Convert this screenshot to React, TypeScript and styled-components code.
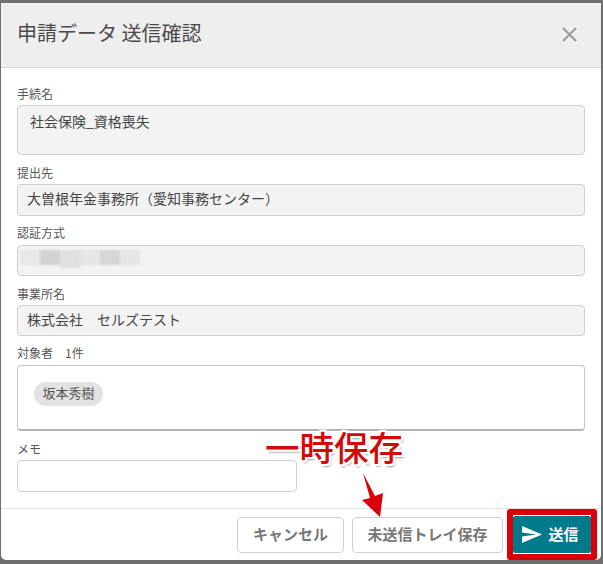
import React from "react";
import styled, { createGlobalStyle } from "styled-components";

const Global = createGlobalStyle`
  *, *::before, *::after { box-sizing: border-box; }
  html, body { margin: 0; padding: 0; background: #6f6f6f; }
  body { width: 603px; height: 564px; overflow: hidden; font-family: "Noto Sans CJK JP", "Liberation Sans", sans-serif; }
`;
const Page = styled.div`
  position: relative;
  width: 603px;
  height: 564px;
  padding: 3px 2px 4px 1px;
  background: #6f6f6f;
`;
const Modal = styled.div`
  height: 557px;
  background: #fff;
  border-radius: 0 0 5px 5px;
  display: flex;
  flex-direction: column;
  overflow: hidden;
`;
const Header = styled.header`
  height: 65px;
  flex: none;
  background: #eeeeee;
  border-bottom: 1px solid #d4d4d4;
  display: flex;
  align-items: center;
  justify-content: space-between;
  padding: 0 24px 4px 16px;
`;
const Title = styled.h1`
  margin: 0;
  font-size: 20px;
  font-weight: 400;
  color: #4a4a4a;
  line-height: 1;
`;
const CloseIcon = styled.svg`
  width: 15px;
  height: 15px;
  margin-top: 2px;
  fill: none;
  stroke: #9a9a9a;
  stroke-width: 2;
`;
const Body = styled.div`
  flex: 1;
  padding: 17px 16px 0;
  display: flex;
  flex-direction: column;
`;
const Label = styled.div`
  font-size: 12px;
  line-height: 18px;
  height: 18px;
  color: #555;
`;
const Box = styled.div<{ $h: number; $mt: number; $mb: number; $px?: number; $pt?: number }>`
  width: 568px;
  height: ${(p) => p.$h}px;
  margin-top: ${(p) => p.$mt}px;
  margin-bottom: ${(p) => p.$mb}px;
  padding: ${(p) => p.$pt ?? 4}px ${(p) => p.$px ?? 9}px 0;
  background: #f3f3f3;
  border: 1px solid #cfcfcf;
  border-radius: 4px;
  font-size: 14px;
  line-height: 20px;
  color: #444;
`;
const TargetBox = styled.div`
  width: 568px;
  height: 66px;
  margin-top: 3px;
  margin-bottom: 9px;
  padding: 16px 16px 0;
  background: #fff;
  border: 1px solid #c8c8c8;
  border-bottom: 2px solid #b4b4b4;
  border-radius: 4px;
`;
const Chip = styled.span`
  display: block;
  width: 69px;
  height: 24px;
  text-align: center;
  border-radius: 12px;
  background: #e2e2e2;
  font-size: 13px;
  line-height: 22px;
  color: #555;
`;
const Memo = styled.div`
  width: 280px;
  height: 32px;
  margin-top: 2px;
  background: #fff;
  border: 1px solid #cfcfcf;
  border-radius: 4px;
`;
const Blur = styled.svg`
  display: block;
  width: 125px;
  height: 18px;
  margin-left: -7px;
  filter: blur(1px);
`;
const Footer = styled.footer`
  flex: none;
  height: 52px;
  border-top: 1px solid #e2e2e2;
  display: flex;
  align-items: flex-start;
  justify-content: flex-end;
  padding: 8px 10px 0 0;
  gap: 8px;
`;
const Button = styled.button<{ $w: number }>`
  width: ${(p) => p.$w}px;
  height: 36px;
  background: #fff;
  border: 1px solid #cfcfcf;
  border-radius: 4px;
  font-family: inherit;
  font-size: 15px;
  font-weight: 700;
  color: #777;
  padding: 0 0 4px;
`;
const SendButton = styled.button`
  width: 78px;
  height: 37px;
  margin: -1px 0 0 2px;
  background: #017a8c;
  border: none;
  border-radius: 2px;
  font-family: inherit;
  font-size: 15px;
  font-weight: 700;
  color: #fff;
  display: flex;
  align-items: center;
  justify-content: center;
  gap: 6px;
  padding: 0 3px 2px 0;
`;
const SendIcon = styled.svg`
  width: 20px;
  height: 17px;
  margin-top: 2px;
  fill: #fff;
`;
const Highlight = styled.div`
  position: absolute;
  left: 507px;
  top: 509px;
  width: 90px;
  height: 51px;
  border: 6px solid #d90009;
  border-radius: 3px;
`;
const Note = styled.div`
  position: absolute;
  left: 265px;
  top: 422px;
  font-size: 34.5px;
  line-height: 48px;
  font-weight: 500;
  color: #d20a0a;
  white-space: nowrap;
  text-shadow: 2px 0 0 #fff, -2px 0 0 #fff, 0 2px 0 #fff, 0 -2px 0 #fff, 2px 2px 0 #fff, -2px 2px 0 #fff, 2px -2px 0 #fff, -2px -2px 0 #fff, 2px 3px 2px #999;
`;
const Arrow = styled.svg`
  position: absolute;
  left: 355px;
  top: 468px;
  width: 35px;
  height: 52px;
`;

export default function App() {
  return (
    <>
      <Global />
      <Page>
        <Modal>
          <Header>
            <Title>申請データ 送信確認</Title>
            <CloseIcon viewBox="0 0 15 15"><path d="M1 1l13 13M14 1L1 14" /></CloseIcon>
          </Header>
          <Body>
            <Label>手続名</Label>
            <Box $h={50} $mt={2} $mb={9} $px={12} $pt={5}>社会保険_資格喪失</Box>
            <Label>提出先</Label>
            <Box $h={32} $mt={2} $mb={8} $pt={3}>大曽根年金事務所（愛知事務センター）</Box>
            <Label>認証方式</Label>
            <Box $h={31} $mt={3} $mb={9}>
              <Blur viewBox="0 0 125 18">
                <rect x="0" y="0" width="20" height="15" fill="#e8e8e8" />
                <rect x="20" y="0" width="20" height="15" fill="#d2d2d2" />
                <rect x="40" y="0" width="20" height="18" fill="#e0e0e0" />
                <rect x="60" y="0" width="20" height="15" fill="#e6e6e6" />
                <rect x="80" y="0" width="20" height="15" fill="#d6d6d6" />
                <rect x="100" y="0" width="20" height="15" fill="#e6e6e6" />
              </Blur>
            </Box>
            <Label>事業所名</Label>
            <Box $h={31} $mt={2} $mb={8} $pt={3}>株式会社　セルズテスト</Box>
            <Label>対象者　1件</Label>
            <TargetBox><Chip>坂本秀樹</Chip></TargetBox>
            <Label>メモ</Label>
            <Memo />
          </Body>
          <Footer>
            <Button $w={107}>キャンセル</Button>
            <Button $w={151}>未送信トレイ保存</Button>
            <SendButton>
              <SendIcon viewBox="2 3 21 18" preserveAspectRatio="none"><path d="M2.01 21L23 12 2.01 3 2 10l15 2-15 2z" /></SendIcon>
              送信
            </SendButton>
          </Footer>
        </Modal>
        <Highlight />
        <Note>一時保存</Note>
        <Arrow viewBox="355 468 35 52">
          <polygon points="363,473 375,496 383,493 380,517 362,500 370,498" fill="#d90009" />
        </Arrow>
      </Page>
    </>
  );
}
